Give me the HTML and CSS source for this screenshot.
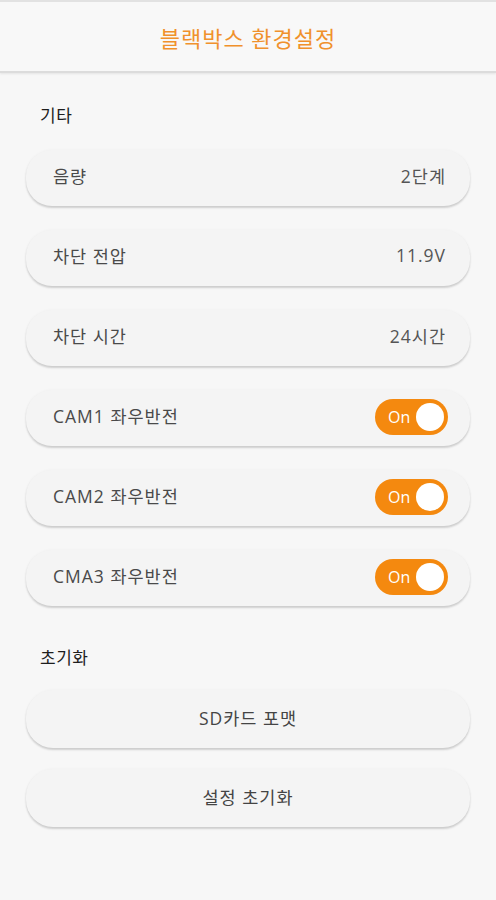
FILE: index.html
```html
<!DOCTYPE html>
<html lang="ko">
<head>
<meta charset="utf-8">
<title>블랙박스 환경설정</title>
<link rel="stylesheet" href="styles.css">
</head>
<body>
<header class="appbar">
  <h1 class="title">블랙박스 환경설정</h1>
</header>
<main class="content">
  <h2 class="section-label">기타</h2>
  <ul class="list">
    <li class="card"><span class="label">음량</span><span class="value">2단계</span></li>
    <li class="card"><span class="label">차단 전압</span><span class="value">11.9V</span></li>
    <li class="card"><span class="label">차단 시간</span><span class="value">24시간</span></li>
    <li class="card"><span class="label">CAM1 좌우반전</span><span class="toggle"><span class="toggle-text">On</span><span class="knob"></span></span></li>
    <li class="card"><span class="label">CAM2 좌우반전</span><span class="toggle"><span class="toggle-text">On</span><span class="knob"></span></span></li>
    <li class="card"><span class="label">CMA3 좌우반전</span><span class="toggle"><span class="toggle-text">On</span><span class="knob"></span></span></li>
  </ul>
  <h2 class="section-label section-label--second">초기화</h2>
  <div class="buttons">
    <button class="btn">SD카드 포맷</button>
    <button class="btn">설정 초기화</button>
  </div>
</main>
</body>
</html>
```
FILE: styles.css
```css
* { box-sizing: border-box; }
html, body { margin: 0; padding: 0; }
body {
  background: #f7f7f7;
  font-family: "Open Sans", "Noto Sans CJK KR", sans-serif;
  color: #444;
  width: 496px;
  min-height: 900px;
}
.appbar {
  height: 73px;
  border-top: 2px solid #e2e2e2;
  background: #f8f8f8;
  border-bottom: 2px solid #dcdcdc;
  box-shadow: 0 1px 2px rgba(0,0,0,0.08);
  display: flex;
  align-items: center;
  justify-content: center;
}
.title {
  margin: 0;
  font-size: 22px;
  font-weight: 400;
  color: #f0912c;
  line-height: 1;
  padding-top: 2px;
  letter-spacing: 1px;
}
.content {
  padding: 31px 26px 0;
}
.section-label {
  margin: 0 0 22px 14px;
  font-size: 17px;
  font-weight: 400;
  color: #1e1e1e;
  line-height: 24px;
  letter-spacing: 0.5px;
}
.section-label--second {
  margin-top: 40px;
  margin-bottom: 20px;
}
.list {
  list-style: none;
  margin: 0;
  padding: 0;
  display: flex;
  flex-direction: column;
  gap: 24px;
}
.card {
  height: 56px;
  border-radius: 26px;
  background: #f4f4f4;
  box-shadow: 0 2px 2px rgba(0,0,0,0.16), 0 0 3px rgba(0,0,0,0.04);
  display: flex;
  align-items: center;
  justify-content: space-between;
  padding: 0 22px 6px 27px;
}
.label {
  font-size: 17.5px;
  color: #4a4a4a;
  letter-spacing: 1px;
}
.value {
  font-size: 17.5px;
  color: #555;
  letter-spacing: 1px;
  padding-right: 2px;
}
.toggle {
  width: 73px;
  height: 36px;
  border-radius: 18px;
  background: #f4890f;
  display: flex;
  align-items: center;
  justify-content: space-between;
  padding: 0 4px 0 13px;
  margin-top: 4px;
}
.toggle-text {
  color: #fff;
  font-size: 16px;
  line-height: 1;
  padding-bottom: 1px;
}
.knob {
  width: 28px;
  height: 28px;
  border-radius: 50%;
  background: #fff;
}
.buttons {
  display: flex;
  flex-direction: column;
  gap: 21px;
}
.btn {
  height: 58px;
  border: none;
  border-radius: 27px;
  background: #f4f4f4;
  box-shadow: 0 2px 2px rgba(0,0,0,0.16), 0 0 3px rgba(0,0,0,0.04);
  font-family: inherit;
  font-size: 17.5px;
  color: #444;
  letter-spacing: 1px;
  padding: 0 0 4px;
}
```
